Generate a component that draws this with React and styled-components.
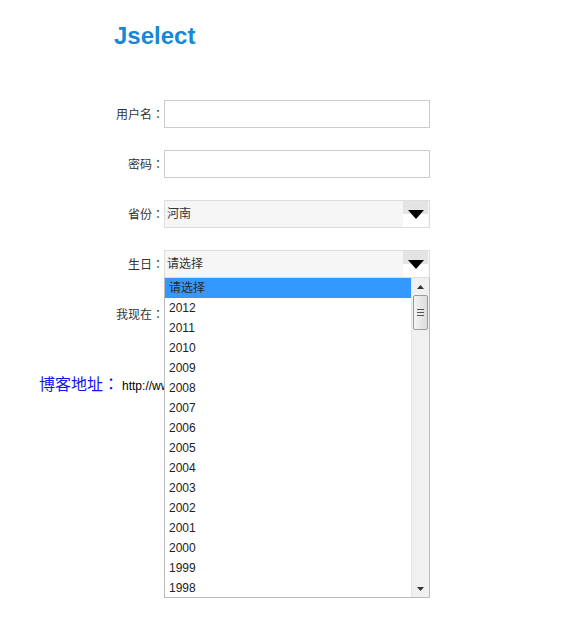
import React from "react";
import styled, { createGlobalStyle } from "styled-components";

const GlobalStyle = createGlobalStyle`
  html, body {
    margin: 0;
    padding: 0;
    background: #fff;
    font-family: "Liberation Sans", Arial, "Noto Sans CJK SC", sans-serif;
    font-size: 12px;
    color: #333;
  }
`;

const Page = styled.div`
  width: 574px;
  height: 643px;
  position: relative;
  overflow: hidden;
`;

const Title = styled.h1`
  margin: 0;
  padding: 22px 0 0 114px;
  font-size: 24px;
  font-weight: bold;
  line-height: 28px;
  color: #1589d5;
`;

const Form = styled.div`
  display: flex;
  flex-direction: column;
  gap: 22px;
  margin-top: 50px;
`;

const Row = styled.div`
  display: flex;
  align-items: center;
  height: 28px;
  position: relative;
`;

const Label = styled.label`
  width: 164px;
  text-align: right;
  font-size: 12px;
  color: #333;
  line-height: 28px;
`;

/* full-width colon centred in its em box, as on the original page */
const Colon = styled.span`
  font-family: "Noto Sans CJK TC", "Noto Sans CJK SC", sans-serif;
`;

const TextInput = styled.input`
  box-sizing: border-box;
  width: 266px;
  height: 28px;
  border: 1px solid #ccc;
  margin: 0;
  padding: 0 3px;
  outline: none;
  background: #fff;
`;

const SelectBox = styled.div`
  box-sizing: border-box;
  width: 266px;
  height: 28px;
  border: 1px solid #ddd;
  background: #f6f6f6;
  display: flex;
  align-items: stretch;
  justify-content: space-between;
  position: relative;
`;

const SelectText = styled.span`
  padding-left: 2px;
  line-height: 26px;
  font-size: 12px;
  color: #333;
`;

const ArrowBox = styled.div`
  width: 25px;
  margin-right: 1px;
  display: flex;
  flex-direction: column;
  position: relative;
`;

const ArrowTop = styled.div`
  height: 13px;
  background: #e4e4e4;
`;

const ArrowBottom = styled.div`
  flex: 1;
  background: #fff;
`;

const Triangle = styled.div`
  position: absolute;
  left: 5px;
  top: 9px;
  width: 0;
  height: 0;
  border-left: 8px solid transparent;
  border-right: 8px solid transparent;
  border-top: 9px solid #000;
`;

const Dropdown = styled.div`
  position: absolute;
  left: 164px;
  top: 28px;
  width: 266px;
  height: 320px;
  box-sizing: border-box;
  border: 1px solid #bbb;
  border-top: none;
  background: #fff;
  display: flex;
  z-index: 10;
`;

const OptionList = styled.ul`
  list-style: none;
  margin: 0;
  padding: 0;
  flex: 1;
  overflow: hidden;
`;

const Option = styled.li`
  height: 20px;
  line-height: 20px;
  padding-left: 4px;
  font-size: 12px;
  color: ${(p) => (p.$active ? "#2b2b2b" : "#222")};
  background: ${(p) => (p.$active ? "#3399ff" : "#fff")};
`;

const ScrollBar = styled.div`
  width: 17px;
  background: #f0f0f0;
  border-left: 1px solid #e6e6e6;
  display: flex;
  flex-direction: column;
  align-items: center;
`;

const ScrollArrow = styled.div`
  height: 17px;
  width: 100%;
  display: flex;
  align-items: center;
  justify-content: center;
`;

const Thumb = styled.div`
  box-sizing: border-box;
  width: 15px;
  height: 35px;
  border: 1px solid #9a9a9a;
  border-radius: 2px;
  background: linear-gradient(to right, #f4f4f4, #dcdcdc);
  display: flex;
  flex-direction: column;
  align-items: center;
  justify-content: center;
  gap: 2px;
`;

const Grip = styled.span`
  width: 7px;
  height: 1px;
  background: #555;
`;

const Track = styled.div`
  flex: 1;
`;

const BlogRow = styled.div`
  display: flex;
  align-items: baseline;
  margin-top: 43px;
  padding-left: 39px;
`;

const BlogLabel = styled.span`
  font-size: 16px;
  color: #1414f0;
`;

const BlogLink = styled.span`
  margin-left: 3px;
  font-size: 12px;
  color: #000;
`;

const years = Array.from({ length: 15 }, (_, i) => 2012 - i);

function Select({ value }) {
  return (
    <SelectBox>
      <SelectText>{value}</SelectText>
      <ArrowBox>
        <ArrowTop />
        <ArrowBottom />
        <Triangle />
      </ArrowBox>
    </SelectBox>
  );
}

export default function App() {
  return (
    <Page>
      <GlobalStyle />
      <Title>Jselect</Title>
      <Form>
        <Row>
          <Label>用户名<Colon>：</Colon></Label>
          <TextInput />
        </Row>
        <Row>
          <Label>密码<Colon>：</Colon></Label>
          <TextInput type="password" />
        </Row>
        <Row>
          <Label>省份<Colon>：</Colon></Label>
          <Select value="河南" />
        </Row>
        <Row>
          <Label>生日<Colon>：</Colon></Label>
          <Select value="请选择" />
          <Dropdown>
            <OptionList>
              <Option $active>请选择</Option>
              {years.map((y) => (
                <Option key={y}>{y}</Option>
              ))}
            </OptionList>
            <ScrollBar>
              <ScrollArrow>
                <svg width="7" height="4" viewBox="0 0 7 4">
                  <path d="M0 4 L3.5 0 L7 4 Z" fill="#333" />
                </svg>
              </ScrollArrow>
              <Thumb>
                <Grip />
                <Grip />
                <Grip />
              </Thumb>
              <Track />
              <ScrollArrow>
                <svg width="7" height="4" viewBox="0 0 7 4">
                  <path d="M0 0 L7 0 L3.5 4 Z" fill="#333" />
                </svg>
              </ScrollArrow>
            </ScrollBar>
          </Dropdown>
        </Row>
        <Row>
          <Label>我现在<Colon>：</Colon></Label>
        </Row>
      </Form>
      <BlogRow>
        <BlogLabel>博客地址<Colon>：</Colon></BlogLabel>
        <BlogLink>http://www.cnblogs.com/</BlogLink>
      </BlogRow>
    </Page>
  );
}
